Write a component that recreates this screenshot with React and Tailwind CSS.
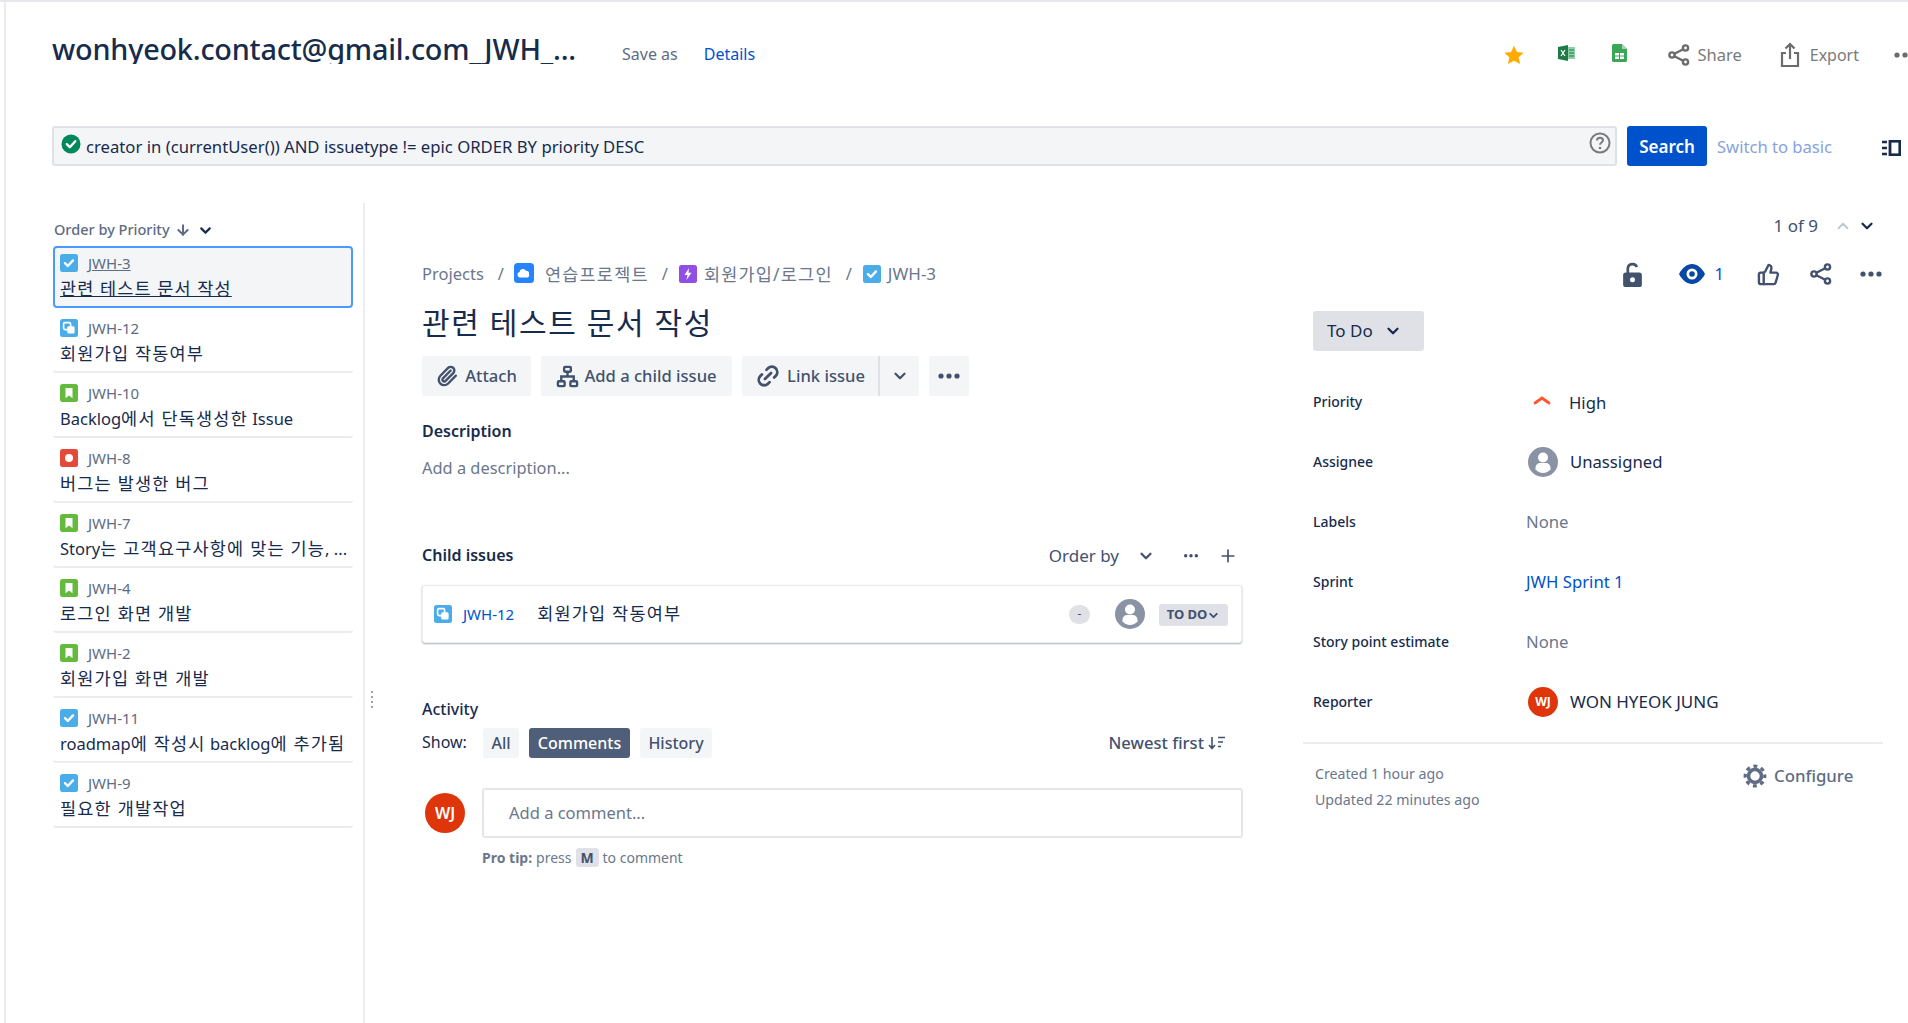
import React from "react";
import { ChevronDown, ChevronUp, Paperclip, Link2, Plus, ThumbsUp, ArrowDown } from "lucide-react";

const Tile = ({ c, children, s = 18 }) => (
  <svg width={s} height={s} viewBox="0 0 18 18" className="shrink-0 block">
    <rect width="18" height="18" rx="2.5" fill={c} />
    {children}
  </svg>
);
const Task = (p) => (
  <Tile c="#4bade8" {...p}>
    <path d="M5 9.2l2.8 2.8L13 6.4" fill="none" stroke="#fff" strokeWidth="2.4" strokeLinecap="round" strokeLinejoin="round" />
  </Tile>
);
const Sub = (p) => (
  <Tile c="#4bade8" {...p}>
    <rect x="3.6" y="3.6" width="7" height="7" rx="1.5" fill="#4bade8" stroke="#fff" strokeWidth="1.6" />
    <rect x="7.2" y="7.2" width="7.4" height="7.4" rx="1.5" fill="#fff" />
  </Tile>
);
const Story = (p) => (
  <Tile c="#63ba3c" {...p}>
    <path d="M5.5 4h7v10.2L9 11.4l-3.5 2.8z" fill="#fff" />
  </Tile>
);
const Bug = (p) => (
  <Tile c="#e5493a" {...p}>
    <circle cx="9" cy="9" r="4" fill="#fff" />
  </Tile>
);
const Dots = ({ w = 24, c = "#42526e", r = 2.6, className = "" }) => (
  <svg width={w} height={w / 3} viewBox="0 0 24 8" className={className}>
    <circle cx="4" cy="4" r={r} fill={c} />
    <circle cx="12" cy="4" r={r} fill={c} />
    <circle cx="20" cy="4" r={r} fill={c} />
  </svg>
);
const ShareIco = ({ c, w = 24 }) => (
  <svg width={w} height={w} viewBox="0 0 24 24" fill="none" stroke={c} strokeWidth="2.4">
    <circle cx="18.5" cy="5" r="2.6" />
    <circle cx="18.5" cy="19" r="2.6" />
    <circle cx="5" cy="12" r="2.6" />
    <path d="M7.4 10.8l8.8-4.6M7.4 13.2l8.8 4.6" />
  </svg>
);
const Avatar = ({ s = 30 }) => (
  <svg width={s} height={s} viewBox="0 0 30 30" className="shrink-0">
    <circle cx="15" cy="15" r="15" fill="#8993a4" />
    <circle cx="15" cy="10.5" r="5" fill="#fff" />
    <path d="M7.5 21c0-3 2.2-5 5-5h5c2.8 0 5 2 5 5v1.2C20.4 24.8 18 26 15 26s-5.400-1.200-7.500-3.800z" fill="#fff" />
  </svg>
);

/* Hangul runs get a little more room, Latin runs a little less, as in the reference's fonts */
const Mixed = ({ text }) =>
  text.split(/([가-힣]+(?: [가-힣]+)*)/).map((part, i) =>
    /[가-힣]/.test(part) ? (
      <span key={i} className="text-[17.5px] tracking-[1.2px]">{part}</span>
    ) : (
      <span key={i} className="text-[16.5px]">{part}</span>
    )
  );

const rows = [
  [Sub, "JWH-12", "회원가입 작동여부"],
  [Story, "JWH-10", "Backlog에서 단독생성한 Issue"],
  [Bug, "JWH-8", "버그는 발생한 버그"],
  [Story, "JWH-7", "Story는 고객요구사항에 맞는 기능, ..."],
  [Story, "JWH-4", "로그인 화면 개발"],
  [Story, "JWH-2", "회원가입 화면 개발"],
  [Task, "JWH-11", "roadmap에 작성시 backlog에 추가됨"],
  [Task, "JWH-9", "필요한 개발작업"],
];

const Field = ({ label, children }) => (
  <div className="flex items-center h-[60px]">
    <div className="w-[213px] -mt-[2px] text-[14px] text-[#172b4d] font-medium">{label}</div>
    <div className="flex items-center text-[16.7px] text-[#172b4d] whitespace-nowrap">{children}</div>
  </div>
);

export default function App() {
  return (
    <div className="relative w-[1908px] h-[1023px] overflow-hidden bg-white text-[#172b4d] font-['Noto_Sans','Noto_Sans_CJK_KR',sans-serif]">
      <div className="h-[2px] bg-[#e6e8ee]" />
      <div className="ml-[4px] border-l-2 border-[#ebecf0] h-[1021px]">
        {/* header */}
        <div className="h-[106px] flex items-center pl-[46px]">
          <div className="w-[540px] shrink-0 h-[29px] mb-[11px] overflow-hidden text-[28.8px] leading-[27px] font-medium tracking-[-0.2px] whitespace-nowrap">
            wonhyeok.contact@gmail.com_JWH_...
          </div>
          <div className="ml-[30px] text-[16px] text-[#5e6c84] whitespace-nowrap -mt-[2px]">Save as</div>
          <div className="ml-[26px] text-[16px] text-[#0052cc] whitespace-nowrap -mt-[2px]">Details</div>
          <div className="ml-auto -mr-[9px] flex items-center">
            <svg width="22" height="22" viewBox="0 0 24 24"><path d="M12 1.800l3.200 6.800 7.300.9-5.400 5 1.500 7.300L12 18.200l-6.600 3.600 1.500-7.300-5.400-5 7.300-.9z" fill="#ffab00" /></svg>
            <svg width="17" height="16" viewBox="0 0 17 16" className="ml-[33px] -mt-[4px]">
              <path d="M0 2l10-2v16L0 14z" fill="#1e7a44" />
              <rect x="10" y="2" width="7" height="12" fill="#8fd0a8" />
              <path d="M11 5h5M11 8h5M11 11h5" stroke="#1e7a44" strokeWidth="1" />
              <path d="M3 5l4 6M7 5l-4 6" stroke="#fff" strokeWidth="1.300" />
            </svg>
            <svg width="15" height="18" viewBox="0 0 15 18" className="ml-[37px] -mt-[4px]">
              <path d="M1.500 0H10l5 5v11.500a1.500 1.500 0 0 1-1.500 1.500h-12A1.500 1.500 0 0 1 0 16.500v-15A1.500 1.500 0 0 1 1.500 0z" fill="#3aa757" />
              <path d="M10 0l5 5h-5z" fill="#a5d6b4" />
              <rect x="3" y="9" width="9" height="6" fill="#fff" />
              <path d="M3 12h9M7.500 9v6" stroke="#3aa757" strokeWidth="1" />
            </svg>
            <div className="ml-[40px]"><ShareIco c="#6b6b6b" /></div>
            <div className="ml-[6px] text-[16.5px] text-[#7a7a7a]">Share</div>
            <svg width="24" height="26" viewBox="0 0 24 26" fill="none" stroke="#6b6b6b" strokeWidth="2.200" className="ml-[36px]">
              <path d="M8 11H4v13h16V11h-4" />
              <path d="M12 17V2M7.500 6.500L12 2l4.500 4.500" />
            </svg>
            <div className="ml-[8px] text-[16px] text-[#7a7a7a]">Export</div>
            <Dots c="#6b6b6b" className="ml-[34px] shrink-0" />
          </div>
        </div>

        {/* search */}
        <div className="mt-[18px] h-[40px] flex items-start pl-[46px]">
          <div className="w-[1565px] shrink-0 h-[40px] bg-[#f4f5f7] border-2 border-[#dfe1e6] rounded-[3px] flex items-center pl-[7px]">
            <svg width="20" height="20" viewBox="0 0 20 20" className="-mt-[4px]">
              <circle cx="10" cy="10" r="9.500" fill="#00875a" />
              <path d="M5.800 10.200l3 3 5.500-6" fill="none" stroke="#fff" strokeWidth="2.400" strokeLinecap="round" strokeLinejoin="round" />
            </svg>
            <span className="ml-[5px] pt-[1px] text-[16.7px] text-[#172b4d] whitespace-nowrap">creator in (currentUser()) AND issuetype != epic ORDER BY priority DESC</span>
            <svg width="22" height="22" viewBox="0 0 22 22" className="ml-auto mr-[4px] -mt-[6px]" fill="none">
              <circle cx="11" cy="11" r="9.500" stroke="#7a7a7a" strokeWidth="2" />
              <path d="M8 8.500c0-1.700 1.300-2.800 3-2.800s3 1.100 3 2.600c0 2.200-3 2.200-3 4.500" stroke="#7a7a7a" strokeWidth="2" />
              <circle cx="11" cy="16" r="1.300" fill="#7a7a7a" />
            </svg>
          </div>
          <div className="ml-[10px] w-[80px] h-[40px] pt-[2px] bg-[#0052cc] rounded-[3px] flex items-center justify-center text-white text-[17px] font-semibold">Search</div>
          <div className="ml-[10px] h-[40px] pt-[2px] flex items-center text-[16.6px] text-[#85a3e0] whitespace-nowrap">Switch to basic</div>
          <svg width="19" height="16" viewBox="0 0 19 16" className="ml-[50px] mt-[14px]">
            <path d="M0 2h5M0 8h5M0 14h5" stroke="#172b4d" strokeWidth="2.400" />
            <rect x="8" y="1.200" width="9.800" height="13.600" fill="none" stroke="#172b4d" strokeWidth="2.800" />
          </svg>
        </div>

        {/* body */}
        <div className="mt-[37px] flex h-[820px]">
          <div className="relative w-[359px] shrink-0 pl-[47px] pr-[10px] pt-[17px] border-r-2 border-[#ebecf0]">
            <div className="h-[20px] pl-[1px] flex items-center text-[14.5px] font-medium text-[#5e6c84] whitespace-nowrap">
              Order by Priority
              <ArrowDown size={16} strokeWidth={3} className="ml-[5px] text-[#5e6c84]" />
              <ChevronDown size={17} strokeWidth={3} className="ml-[6px] text-[#172b4d]" />
            </div>
            <div className="mt-[6px] h-[62px] w-[300px] border-2 border-[#4c9aff] rounded-[4px] bg-[#f4f5f7] pl-[5px] pt-[6px]">
              <div className="flex items-center h-[18px]">
                <Task />
                <span className="pl-[10px] text-[15px] leading-[18px] text-[#5e6c84] underline">JWH-3</span>
              </div>
              <div className="mt-[4px] text-[17.5px] leading-[24px] tracking-[1.1px] underline whitespace-nowrap">관련 테스트 문서 작성</div>
            </div>
            {rows.map(([I, id, t]) => (
              <div key={id} className="h-[65px] w-[300px] pt-[11px] pl-[7px] border-b-2 border-[#ebecf0] rounded-b-[3px]">
                <div className="flex items-center h-[18px]">
                  <I />
                  <span className="ml-[10px] text-[15px] text-[#5e6c84]">{id}</span>
                </div>
                <div className="mt-[4px] leading-[24px] whitespace-nowrap"><Mixed text={t} /></div>
              </div>
            ))}
            <div className="absolute left-[365px] top-[488px] flex flex-col gap-[3px]">
              <div className="w-[2px] h-[2px] bg-[#97a0af]" />
              <div className="w-[2px] h-[2px] bg-[#97a0af]" />
              <div className="w-[2px] h-[2px] bg-[#97a0af]" />
              <div className="w-[2px] h-[2px] bg-[#97a0af]" />
            </div>
          </div>

          <div className="flex-1 pl-[57px]">
            <div className="h-[46px] flex items-center justify-end pr-[31px] w-[1485px]">
              <span className="text-[17px] text-[#42526e]">1 of 9</span>
              <ChevronUp size={18} strokeWidth={2.5} className="ml-[16px] text-[#c1c7d0]" />
              <ChevronDown size={18} strokeWidth={3} className="ml-[6px] text-[#172b4d]" />
            </div>
            <div className="flex">
              {/* left col */}
              <div className="w-[820px] shrink-0">
                <div className="h-[50px] flex items-center text-[16.5px] text-[#6b778c] whitespace-nowrap">
                  <span>Projects</span>
                  <span className="ml-[14px]">/</span>
                  <svg width="20" height="20" viewBox="0 0 20 20" className="ml-[10px] -mt-[2px]">
                    <rect width="20" height="20" rx="3.500" fill="#2684ff" />
                    <path d="M6 14.500a2.800 2.800 0 0 1-.5-5.500 3.500 3.500 0 0 1 6.500-1.300A3 3 0 0 1 15 11a2.800 2.800 0 0 1-1 3.500z" fill="#fff" />
                  </svg>
                  <span className="ml-[11px] text-[17.5px] tracking-[1.2px]">연습프로젝트</span>
                  <span className="ml-[13px]">/</span>
                  <span className="ml-[11px]">
                    <Tile c="#904ee2" s={18}>
                      <path d="M10 3L5.500 10H8.500L7.500 15L12.500 7.800H9.500z" fill="#fff" />
                    </Tile>
                  </span>
                  <span className="ml-[7px] text-[17.5px] tracking-[1.2px]">회원가입/로그인</span>
                  <span className="ml-[13px]">/</span>
                  <span className="ml-[11px]"><Task /></span>
                  <span className="ml-[7px] text-[17px]">JWH-3</span>
                </div>
                <div className="h-[46px] flex items-center text-[30px] tracking-[1.600px] text-[#172b4d] whitespace-nowrap">관련 테스트 문서 작성</div>
                <div className="mt-[11px] h-[40px] flex text-[16.6px] font-medium text-[#42526e] whitespace-nowrap">
                  <div className="w-[109px] bg-[#f4f5f7] rounded-[3px] flex items-center justify-center gap-[7px]">
                    <Paperclip size={22} strokeWidth={2.6} />
                    Attach
                  </div>
                  <div className="ml-[10px] w-[191px] bg-[#f4f5f7] rounded-[3px] flex items-center justify-center gap-[5px]">
                    <svg width="23" height="23" viewBox="0 0 24 24" fill="none" stroke="#42526e" strokeWidth="2.500">
                      <rect x="8.500" y="2" width="7" height="5" rx="1" />
                      <rect x="2" y="17" width="7" height="5" rx="1" />
                      <rect x="15" y="17" width="7" height="5" rx="1" />
                      <path d="M12 7v5M5.500 17v-5h13v5" />
                    </svg>
                    Add a child issue
                  </div>
                  <div className="ml-[10px] w-[136px] bg-[#f4f5f7] rounded-l-[3px] flex items-center justify-center gap-[6px]">
                    <Link2 size={26} strokeWidth={2.6} className="-rotate-45" />
                    Link issue
                  </div>
                  <div className="w-[41px] bg-[#f4f5f7] border-l-2 border-[#dfe1e6] rounded-r-[3px] flex items-center justify-center">
                    <ChevronDown size={18} strokeWidth={3} />
                  </div>
                  <div className="ml-[10px] w-[40px] bg-[#f4f5f7] rounded-[3px] flex items-center justify-center">
                    <Dots />
                  </div>
                </div>
                <div className="mt-[24px] h-[22px] leading-[22px] text-[16px] font-semibold text-[#172b4d]">Description</div>
                <div className="mt-[14px] h-[24px] leading-[24px] text-[16.4px] text-[#6b778c]">Add a description...</div>

                <div className="mt-[64px] h-[24px] flex items-center">
                  <div className="text-[16px] font-semibold leading-[22px] -mt-[2px]">Child issues</div>
                  <div className="ml-auto text-[17px] text-[#42526e]">Order by</div>
                  <ChevronDown size={18} strokeWidth={3} className="ml-[18px] text-[#42526e]" />
                  <Dots w={16} r={2.600} className="ml-[28px]" />
                  <Plus size={20} strokeWidth={2} className="ml-[19px] mr-[4px] text-[#42526e]" />
                </div>
                <div className="mt-[17px] h-[58px] rounded-[3px] bg-white border border-[#ebecf0] shadow-[0_1px_2px_rgba(9,30,66,0.35)] flex items-center pl-[11px] pr-[13px]">
                  <Sub />
                  <span className="ml-[11px] text-[15px] text-[#0052cc]">JWH-12</span>
                  <span className="ml-[23px] text-[17.5px] tracking-[1.2px] -mt-[1px]">회원가입 작동여부</span>
                  <div className="ml-auto w-[21px] h-[19px] rounded-full bg-[#dfe1e6] text-[12px] text-[#42526e] flex items-center justify-center">-</div>
                  <div className="ml-[25px]"><Avatar /></div>
                  <div className="ml-[14px] mt-[2px] w-[69px] h-[22px] rounded-[3px] bg-[#dfe1e6] flex items-center justify-center text-[13px] font-bold text-[#42526e] whitespace-nowrap">
                    TO DO
                    <ChevronDown size={13} strokeWidth={3.500} />
                  </div>
                </div>

                <div className="mt-[54px] h-[24px] leading-[24px] text-[16px] font-medium">Activity</div>
                <div className="mt-[7px] h-[30px] flex items-center">
                  <span className="text-[16px] text-[#172b4d] w-[61px] -mt-[2px]">Show:</span>
                  <div className="w-[36px] h-[30px] rounded-[3px] bg-[#f4f5f7] flex items-center justify-center text-[16px] font-medium text-[#42526e]">All</div>
                  <div className="ml-[10px] w-[101px] h-[30px] rounded-[3px] bg-[#505f79] flex items-center justify-center text-[16px] font-medium text-white">Comments</div>
                  <div className="ml-[10px] w-[72px] h-[30px] rounded-[3px] bg-[#f4f5f7] flex items-center justify-center text-[16px] font-medium text-[#42526e]">History</div>
                  <div className="ml-auto text-[16.6px] font-medium text-[#42526e] whitespace-nowrap">Newest first</div>
                  <svg width="18" height="16" viewBox="0 0 18 16" className="ml-[4px] mr-[16px]" fill="none" stroke="#42526e" strokeWidth="1.600">
                    <path d="M4 2v11M1 10l3 3.500L7 10M10 2.500h7M10 7h5M10 11.500h3" />
                  </svg>
                </div>
                <div className="mt-[30px] flex items-start">
                  <div className="ml-[3px] mt-[5px] w-[40px] h-[40px] rounded-full bg-[#de350b] flex items-center justify-center text-white text-[16px] font-semibold shrink-0">WJ</div>
                  <div className="ml-[17px] w-[761px] shrink-0 h-[50px] border-2 border-[#e4e6ea] rounded-[3px] flex items-center pl-[25px] pt-[1px] text-[16.5px] text-[#6b778c]">Add a comment...</div>
                </div>
                <div className="mt-[9px] ml-[60px] h-[20px] flex items-center text-[14px] text-[#6b778c] whitespace-nowrap">
                  <b className="font-bold">Pro tip:</b>
                  <span className="ml-[4px]">press</span>
                  <span className="mx-[4px] w-[23px] h-[19px] rounded-[3px] bg-[#dfe1e6] text-[#42526e] font-bold flex items-center justify-center">M</span>
                  <span>to comment</span>
                </div>
              </div>

              {/* right col */}
              <div className="ml-[71px] w-[570px] shrink-0">
                <div className="h-[50px] flex items-center justify-end">
                  <svg width="19" height="25" viewBox="0 0 18 24" className="mr-[37px]">
                    <path d="M4.500 11V6.500a4.500 4.500 0 0 1 8.700-1.600" fill="none" stroke="#42526e" strokeWidth="2.600" />
                    <rect y="10" width="18" height="14" rx="2.500" fill="#42526e" />
                    <circle cx="9" cy="17" r="2.400" fill="#fff" />
                  </svg>
                  <svg width="26" height="20" viewBox="0 0 26 20">
                    <path d="M0 10C3 4 8 0 13 0s10 4 13 10c-3 6-8 10-13 10S3 16 0 10z" fill="#0747a6" />
                    <circle cx="13" cy="10" r="5.500" fill="#fff" />
                    <circle cx="13" cy="10" r="2.800" fill="#0747a6" />
                  </svg>
                  <span className="ml-[10px] mr-[33px] text-[16.500px] text-[#0052cc]">1</span>
                  <ThumbsUp size={23} strokeWidth={2.500} className="text-[#42526e] mr-[29px]" />
                  <ShareIco c="#42526e" />
                  <Dots c="#42526e" className="ml-[26px]" />
                </div>
                <div className="mt-[12px] w-[111px] h-[40px] bg-[#dfe1e6] rounded-[3px] flex items-center pl-[14px] text-[17px] text-[#172b4d] whitespace-nowrap">
                  To Do
                  <ChevronDown size={18} strokeWidth={3} className="ml-[11px] text-[#172b4d]" />
                </div>
                <div className="mt-[21px]">
                  <Field label="Priority">
                    <svg width="20" height="12" viewBox="0 0 20 12" className="ml-[6px] mr-[17px] -mt-[4px]">
                      <path d="M3 9l7-5 7 5" fill="none" stroke="#ff5630" strokeWidth="2.800" strokeLinecap="round" />
                    </svg>
                    <span className="mt-[1px]">High</span>
                  </Field>
                  <Field label="Assignee">
                    <span className="ml-[2px] mr-[12px]"><Avatar /></span>
                    Unassigned
                  </Field>
                  <Field label="Labels"><span className="text-[#6b778c]">None</span></Field>
                  <Field label="Sprint"><span className="text-[#0052cc]">JWH Sprint 1</span></Field>
                  <Field label="Story point estimate"><span className="text-[#6b778c]">None</span></Field>
                  <Field label="Reporter">
                    <span className="ml-[2px] mr-[12px] w-[30px] h-[30px] rounded-full bg-[#de350b] text-white text-[12px] font-bold flex items-center justify-center">WJ</span>
                    <span className="text-[17px]">WON HYEOK JUNG</span>
                  </Field>
                </div>
                <div className="mt-[10px] -ml-[10px] w-[580px] h-[2px] bg-[#ebecf0]" />
                <div className="mt-[17px] flex text-[14.2px] text-[#6b778c]">
                  <div className="ml-[2px] w-[305px] whitespace-nowrap">
                    <div className="h-[26px] leading-[26px]">Created 1 hour ago</div>
                    <div className="h-[26px] leading-[26px]">Updated 22 minutes ago</div>
                  </div>
                  <div className="ml-[123px] h-[26px] mt-[2px] flex items-center text-[16.8px] font-medium text-[#5e6c84] whitespace-nowrap">
                    <svg width="24" height="24" viewBox="0 0 24 24" fill="none" stroke="#5e6c84" className="mr-[7px]">
                      <circle cx="12" cy="12" r="6.500" strokeWidth="3.600" />
                      <circle cx="12" cy="12" r="9.800" strokeWidth="3.200" strokeDasharray="3.900 3.800" strokeDashoffset="1.900" />
                    </svg>
                    Configure
                  </div>
                </div>
              </div>
            </div>
          </div>
        </div>
      </div>
    </div>
  );
}
